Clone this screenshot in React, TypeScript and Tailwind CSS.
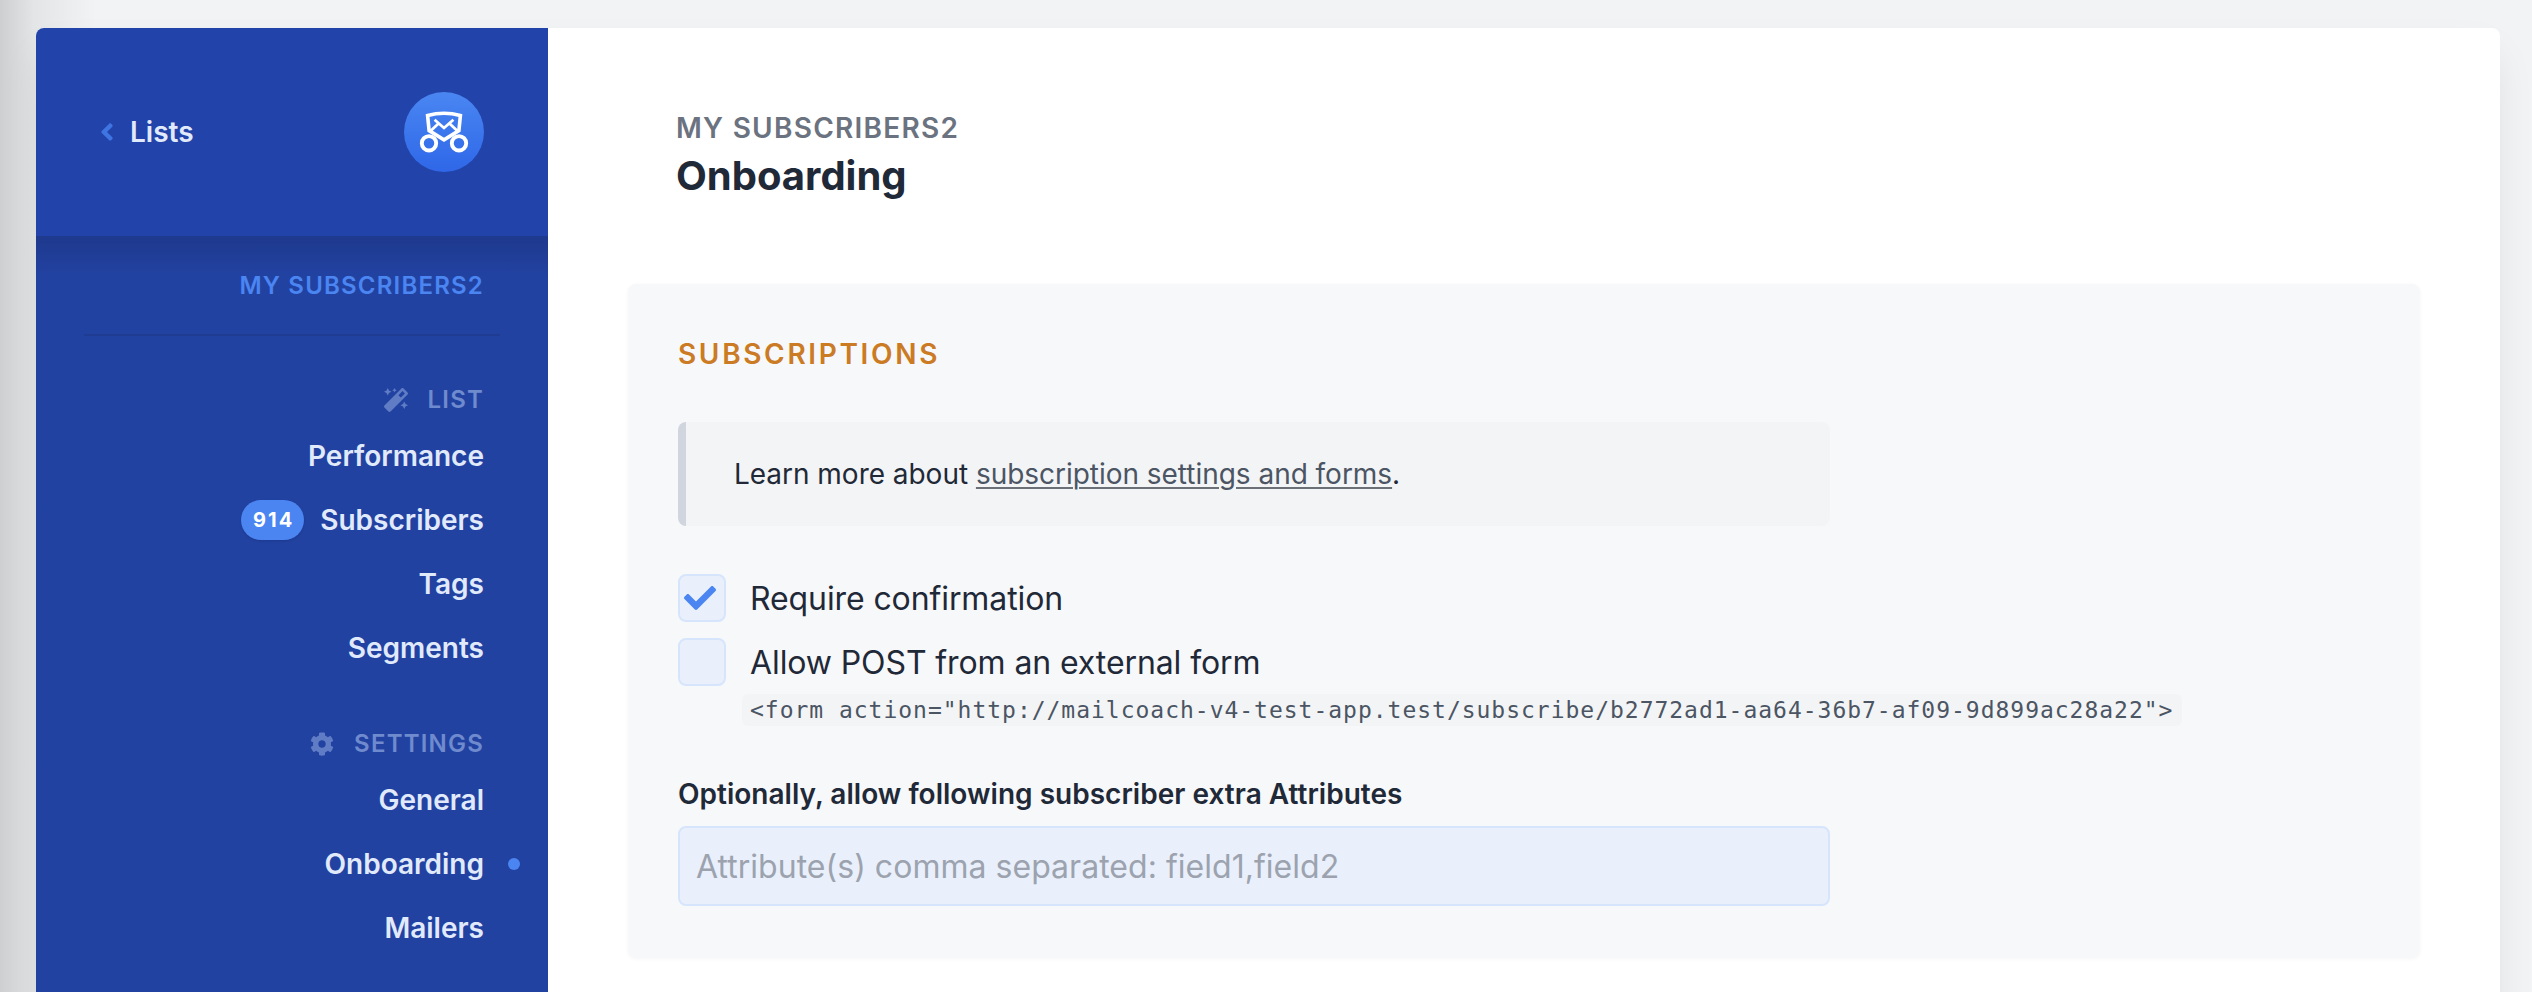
import React from "react";
import { FaAngleLeft, FaCheck, FaCog, FaMagic } from "react-icons/fa";

function Logo() {
  return (
    <div className="h-20 w-20 rounded-full bg-linear-to-b from-[#4a86f2] to-[#2f67e8]">
      <svg viewBox="0 0 80 80" className="h-20 w-20" fill="none" stroke="#fff">
        <path strokeWidth="3.6" d="M23.6 23.6Q40 19 56.4 23.6L54.9 38.6L40 47.8L25.1 38.6Z" />
        <path strokeWidth="2.8" d="M30.6 27.8L40 36L49.4 27.8M34.5 31.5L26 39.5M45.5 31.5L54 39.5" />
        <circle cx="25" cy="51.3" r="7.2" strokeWidth="3.9" />
        <circle cx="55" cy="51.3" r="7.2" strokeWidth="3.9" />
      </svg>
    </div>
  );
}

function NavHeading({ icon, children }: { icon: React.ReactNode; children: React.ReactNode }) {
  return (
    <div className="flex h-12 items-center justify-end gap-5 text-2xl font-[560] tracking-[0.05em] text-[#6f8bce]">
      <span className="text-[#5f7cc5]">{icon}</span>
      {children}
    </div>
  );
}

function NavItem({ label, badge, active }: { label: string; badge?: string; active?: boolean }) {
  return (
    <a className="relative flex h-16 items-center justify-end gap-4 text-[28px] font-[570] text-[#e1eafb]">
      {badge && (
        <span className="flex h-10 items-center rounded-full bg-[#4a85f1] pr-[10px] pl-3 text-xl font-bold tracking-[0.1em] text-white shadow-sm">
          {badge}
        </span>
      )}
      {label}
      {active && <span className="absolute top-[26px] -right-9 h-3 w-3 rounded-full bg-[#4a85f1]" />}
    </a>
  );
}

function Checkbox({ checked, label }: { checked?: boolean; label: string }) {
  return (
    <label className="flex h-12 items-center gap-6">
      <span className="flex h-12 w-12 items-center rounded-lg border-2 border-[#d6e5fb] bg-[#e9f0fb] pl-1">
        {checked && <FaCheck className="h-8 w-8 text-[#4a85f1]" />}
      </span>
      <span className="pt-0.5 text-[32px] tracking-[-0.1px]">{label}</span>
    </label>
  );
}

export default function App() {
  return (
    <div className="relative h-[992px] overflow-hidden bg-[#f2f3f5] pt-7 pr-8 pl-9 font-['Inter',sans-serif] text-[#1f2937]">
      <div className="absolute inset-y-0 left-0 w-24 bg-linear-to-r from-black/15 via-black/6 via-35% to-transparent" />
      <div className="relative flex h-[1100px] rounded-lg bg-white shadow-[0_20px_40px_-8px_rgba(0,0,0,0.1)]">
        <aside className="w-[512px] shrink-0 rounded-tl-lg bg-[#2243a9]">
          <div className="flex h-[208px] items-center justify-between pr-16 pl-[57px] text-[28px] font-[570] text-[#e1eafb]">
            <span className="flex items-center gap-[9px]">
              <FaAngleLeft className="text-[#3f75e2]" />
              Lists
            </span>
            <Logo />
          </div>
          <div className="h-[900px] bg-linear-to-b from-[#1e398d] to-[#2242a2] to-[40px] px-12">
            <div className="flex h-[100px] items-center justify-end border-b-2 border-[#1f3b92] pt-0.5 pr-4 text-2xl font-[560] tracking-[0.05em] text-[#4a85f1]">
              MY SUBSCRIBERS2
            </div>
            <nav className="pt-10 pr-4">
              <NavHeading icon={<FaMagic />}>LIST</NavHeading>
              <NavItem label="Performance" />
              <NavItem label="Subscribers" badge="914" />
              <NavItem label="Tags" />
              <NavItem label="Segments" />
              <div className="h-10" />
              <NavHeading icon={<FaCog />}>SETTINGS</NavHeading>
              <NavItem label="General" />
              <NavItem label="Onboarding" active />
              <NavItem label="Mailers" />
            </nav>
          </div>
        </aside>
        <main className="flex-1 pr-20 pl-20">
          <header className="h-64 pt-20 pl-12">
            <div className="text-[28px] leading-10 font-[560] tracking-[0.045em] text-[#6b7280]">MY SUBSCRIBERS2</div>
            <h1 className="text-[40px] leading-[56px] font-bold">Onboarding</h1>
          </header>
          <section className="h-[674px] rounded-lg bg-[#f7f8fa] px-[50px] pt-[50px] shadow-[0_1px_4px_rgba(0,0,0,0.04)]">
            <h2 className="text-[28px] leading-10 font-[560] tracking-[0.095em] text-[#cb7b24]">SUBSCRIPTIONS</h2>
            <div className="mt-12 flex h-[104px] w-[1152px] items-center rounded-lg border-l-8 border-[#d1d5de] bg-[#f3f4f6] pl-12 text-[28px]">
              <p className="tracking-[-0.03px]">
                Learn more about{" "}
                <a className="text-[#4b5563] underline decoration-[#6b6f76] decoration-2 underline-offset-[3px]">subscription settings and forms</a>.
              </p>
            </div>
            <div className="mt-12 flex flex-col gap-4">
              <Checkbox checked label="Require confirmation" />
              <Checkbox label="Allow POST from an external form" />
            </div>
            <code className="mt-2 ml-16 flex h-8 w-[1440px] items-center rounded-md bg-[#f3f4f6] pl-2 font-['DejaVu_Sans_Mono',monospace] text-[23px] tracking-[0.98px] whitespace-nowrap text-[#4b5563]">
              {'<form action="http://mailcoach-v4-test-app.test/subscribe/b2772ad1-aa64-36b7-af09-9d899ac28a22">'}
            </code>
            <div className="mt-12 text-[28px] leading-10 font-semibold tracking-[0.02px]">
              Optionally, allow following subscriber extra Attributes
            </div>
            <input
              className="mt-3 h-20 w-[1152px] rounded-lg border-2 border-[#d6e5fb] bg-[#e9f0fb] px-4 text-[32px] tracking-[0.03px] placeholder:text-[#9ca3af]"
              placeholder="Attribute(s) comma separated: field1,field2"
            />
          </section>
        </main>
      </div>
    </div>
  );
}
